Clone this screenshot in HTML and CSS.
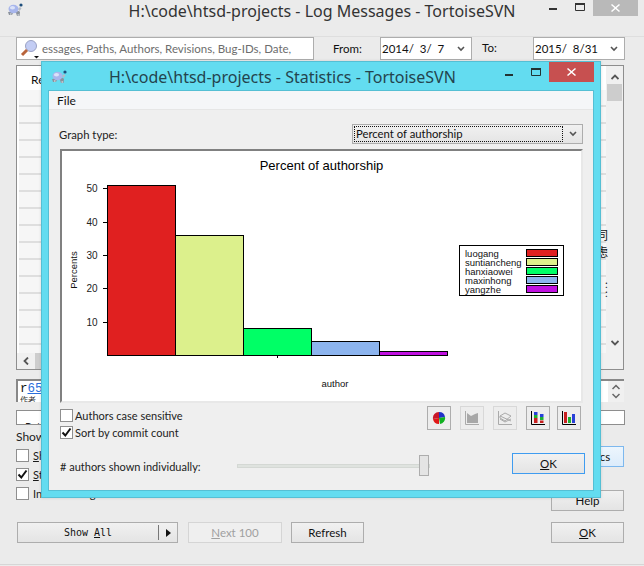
FILE: index.html
```html
<!DOCTYPE html>
<html lang="en">
<head>
<meta charset="utf-8">
<title>Log Messages - TortoiseSVN</title>
<link rel="stylesheet" href="styles.css">
</head>
<body>
<div class="log">
  <header class="titlebar">
    <svg class="turtle" viewBox="0 0 16 14"><path d="M1 9l1 3h3l1-2h3l1 3h2.500l.5-4-1-1z" fill="#8b929c"/><path d="M3 11h1.500M10.500 12h1.500" stroke="#eef0f4" stroke-width="1.200"/><ellipse cx="6.500" cy="6" rx="5" ry="4.200" fill="#a8b6ec"/><ellipse cx="5.500" cy="4.800" rx="2.600" ry="1.700" fill="#dbe2f8"/><path d="M11 6l2-2 1.500 1.500L12.500 8z" fill="#b4bac6"/><circle cx="14" cy="2" r="1.600" fill="#1d4d7c"/></svg>
    <h1 class="title">H:\code\htsd-projects - Log Messages - TortoiseSVN</h1>
    <div class="caption">
      <svg class="cap-min" viewBox="0 0 8 2"><rect width="8" height="2" fill="#333"/></svg>
      <svg class="cap-max" viewBox="0 0 10 8"><path d="M.5 1.500h9v6h-9z" fill="none" stroke="#333"/><rect width="10" height="2" fill="#333"/></svg>
      <span class="cap-close cap-close-idle"><svg viewBox="0 0 9 8"><path d="M1 0l3.500 3L8 0l1 1-3.500 3L9 7 8 8 4.500 5 1 8 0 7l3.500-3L0 1z" fill="#fff"/></svg></span>
    </div>
  </header>

  <div class="toolbar">
    <div class="search">
      <svg class="search-icon" viewBox="0 0 22 20"><circle cx="12" cy="7" r="5.500" fill="#c3cdf4" stroke="#9aa2c4"/><path d="M8 11L3 16" stroke="#b8643c" stroke-width="3"/><path d="M15 17h5l-2.500 2.500z" fill="#111"/></svg>
      <span class="search-text">essages, Paths, Authors, Revisions, Bug-IDs, Date,</span>
    </div>
    <label class="from">From:</label>
    <div class="date"><span>2014/  3/  7</span><svg class="chev" viewBox="0 0 8 6"><path d="M1 1l3 3 3-3" fill="none" stroke="#555" stroke-width="1.600"/></svg></div>
    <label class="to">To:</label>
    <div class="date"><span>2015/  8/31</span><svg class="chev" viewBox="0 0 8 6"><path d="M1 1l3 3 3-3" fill="none" stroke="#555" stroke-width="1.600"/></svg></div>
  </div>

  <div class="list">
    <div class="list-main">
      <div class="list-head">Re</div>
      <div class="rows">
        <span class="peek peek-a">同</span>
        <span class="peek peek-b">虑</span>
        <span class="peek peek-c">:</span>
        <span class="peek peek-d">:</span>
      </div>
      <div class="hscroll"><svg class="arrow-h" viewBox="0 0 6 8"><path d="M5 0.500L1.500 4 5 7.500" fill="none" stroke="#555" stroke-width="1.800"/></svg><span class="hthumb"></span></div>
    </div>
    <div class="vscroll">
      <svg class="arrow-v" viewBox="0 0 8 6"><path d="M.5 5L4 1.500 7.500 5" fill="none" stroke="#555" stroke-width="1.800"/></svg>
      <span class="vthumb"></span>
      <svg class="arrow-v arrow-down" viewBox="0 0 8 6"><path d="M.5 1L4 4.500 7.500 1" fill="none" stroke="#555" stroke-width="1.800"/></svg>
    </div>
  </div>

  <div class="message">
    <div class="rev-wrap">
      <div class="rev">r<a class="rev-link">65</a></div>
      <div class="rev-sub">作者</div>
    </div>
    <div class="spin">
      <svg viewBox="0 0 8 6"><path d="M.5 5L4 1.500 7.500 5" fill="none" stroke="#666" stroke-width="1.500"/></svg>
      <svg viewBox="0 0 8 6"><path d="M.5 1L4 4.500 7.500 1" fill="none" stroke="#666" stroke-width="1.500"/></svg>
    </div>
  </div>
  <div class="paths"><span>Path</span></div>

  <div class="lower">
    <div class="options">
      <div class="show">Show</div>
      <div class="check-row"><span class="box"></span><span><u>S</u>how only affected paths</span></div>
      <div class="check-row"><span class="box"><svg viewBox="0 0 11 11"><path d="M1.500 5.500l2.800 3L9.500 1.500" fill="none" stroke="#111" stroke-width="2"/></svg></span><span><u>S</u>top on copy/rename</span></div>
      <div class="check-row"><span class="box"></span><span>Include merged revisions</span></div>
    </div>
    <div class="side">
      <button class="btn btn-side btn-focus">Statistics</button>
      <button class="btn btn-side btn-help">Help</button>
    </div>
  </div>

  <div class="footer">
    <div class="btn split"><span class="split-label">Show <u>A</u>ll</span><span class="split-arrow"></span></div>
    <button class="btn btn-next" disabled><u>N</u>ext 100</button>
    <button class="btn btn-refresh">Refresh</button>
    <button class="btn btn-ok"><u>O</u>K</button>
  </div>
</div>

<section class="stats">
  <header class="stats-title">
    <svg class="turtle" viewBox="0 0 16 14"><path d="M1 9l1 3h3l1-2h3l1 3h2.500l.5-4-1-1z" fill="#8b929c"/><path d="M3 11h1.500M10.500 12h1.500" stroke="#eef0f4" stroke-width="1.200"/><ellipse cx="6.500" cy="6" rx="5" ry="4.200" fill="#a8b6ec"/><ellipse cx="5.500" cy="4.800" rx="2.600" ry="1.700" fill="#dbe2f8"/><path d="M11 6l2-2 1.500 1.500L12.500 8z" fill="#b4bac6"/><circle cx="14" cy="2" r="1.600" fill="#1d4d7c"/></svg>
    <h2 class="title stats-name">H:\code\htsd-projects - Statistics - TortoiseSVN</h2>
    <div class="caption">
      <svg class="cap-min" viewBox="0 0 8 2"><rect width="8" height="2" fill="#233"/></svg>
      <svg class="cap-max" viewBox="0 0 10 8"><path d="M.5 1.500h9v6h-9z" fill="none" stroke="#233"/><rect width="10" height="2" fill="#233"/></svg>
      <span class="cap-close cap-close-hot"><svg viewBox="0 0 9 8"><path d="M1 0l3.500 3L8 0l1 1-3.500 3L9 7 8 8 4.500 5 1 8 0 7l3.500-3L0 1z" fill="#fff"/></svg></span>
    </div>
  </header>
  <div class="client">
    <nav class="menu">File</nav>
    <div class="graph-row">
      <span class="graph-label">Graph type:</span>
      <div class="combo"><span class="combo-focus">Percent of authorship</span><svg class="chev" viewBox="0 0 8 6"><path d="M1 1l3 3 3-3" fill="none" stroke="#555" stroke-width="1.600"/></svg></div>
    </div>
    <div class="chart">
      <svg class="chart-svg" viewBox="62 151 519 250">
        <text class="c-title" x="321.500" y="170">Percent of authorship</text>
        <g class="c-bars">
          <rect x="107.500" y="185.500" width="68" height="170" fill="#e02020"/>
          <rect x="175.500" y="235.500" width="68" height="120" fill="#dcf08c"/>
          <rect x="243.500" y="328.500" width="68" height="27" fill="#00ff66"/>
          <rect x="311.500" y="341.500" width="68" height="14" fill="#8cb4ee"/>
          <rect x="379.500" y="351.500" width="68" height="4" fill="#c010e0"/>
        </g>
        <path class="c-ticks" d="M103 188.500h4M103 222.500h4M103 255.500h4M103 288.500h4M103 322.500h4M277.500 355v3"/>
        <g class="c-label">
          <text x="97.500" y="191.500">50</text>
          <text x="97.500" y="225.500">40</text>
          <text x="97.500" y="258.500">30</text>
          <text x="97.500" y="291.500">20</text>
          <text x="97.500" y="325.500">10</text>
        </g>
        <text class="c-small" transform="translate(76.500 270) rotate(-90)" text-anchor="middle">Percents</text>
        <text class="c-small" x="335" y="387" text-anchor="middle">author</text>
        <rect class="c-legend" x="459.500" y="245.500" width="104" height="50"/>
        <g class="c-small">
          <text x="465" y="257">luogang</text>
          <text x="465" y="266">suntiancheng</text>
          <text x="465" y="275">hanxiaowei</text>
          <text x="465" y="284">maxinhong</text>
          <text x="465" y="293">yangzhe</text>
        </g>
        <g class="c-bars">
          <rect x="526.500" y="249.500" width="31" height="7" fill="#e02020"/>
          <rect x="526.500" y="258.500" width="31" height="7" fill="#dcf08c"/>
          <rect x="526.500" y="267.500" width="31" height="7" fill="#00ff66"/>
          <rect x="526.500" y="276.500" width="31" height="7" fill="#8cb4ee"/>
          <rect x="526.500" y="285.500" width="31" height="7" fill="#c010e0"/>
        </g>
      </svg>
    </div>
    <div class="controls">
      <div class="checks">
        <div class="check-row stat-check"><span class="box"></span><span>Authors case sensitive</span></div>
        <div class="check-row stat-check"><span class="box"><svg viewBox="0 0 11 11"><path d="M1.500 5.500l2.800 3L9.500 1.500" fill="none" stroke="#111" stroke-width="2"/></svg></span><span>Sort by commit count</span></div>
      </div>
      <div class="tools">
        <span class="tool"><svg viewBox="0 0 14 14"><path d="M7 7V1a6 6 0 0 1 6 5z" fill="#2030c8"/><path d="M7 7l6-1a6 6 0 0 1-5 7z" fill="#10b020"/><path d="M7 7v6a6 6 0 0 1-6-5z" fill="#e01818"/><path d="M7 7L1 8a6 6 0 0 1 6-7z" fill="#c81828"/></svg></span>
        <span class="tool tool-off"><svg viewBox="0 0 14 14"><path d="M.5 0v13.500H14" fill="none" stroke="#aaa"/><path d="M2 2l4 3 4-2 3-1v10H2z" fill="#a8a8a8"/></svg></span>
        <span class="tool tool-off"><svg viewBox="0 0 14 14"><path d="M.5 0v13.500H14" fill="none" stroke="#aaa"/><path d="M2 5l5-3 6 3-6 5-5-3zM2 8l5 3 6-3M2 5l11 5" fill="none" stroke="#aaa"/></svg></span>
        <span class="tool"><svg viewBox="0 0 14 14"><path d="M.5 0v13.500H14" fill="none" stroke="#000"/><rect x="3" y="1" width="3.500" height="3" fill="#2840d8"/><rect x="3" y="4" width="3.500" height="3" fill="#20b030"/><rect x="3" y="7" width="3.500" height="5" fill="#c82020"/><rect x="9" y="3" width="3.500" height="3" fill="#2840d8"/><rect x="9" y="6" width="3.500" height="3" fill="#20b030"/><rect x="9" y="9.500" width="3.500" height="2.500" fill="#c82020"/></svg></span>
        <span class="tool tool-last"><svg viewBox="0 0 14 14"><path d="M.5 0v13.500H14" fill="none" stroke="#000"/><rect x="2" y="1" width="3" height="11" fill="#c82020"/><rect x="6" y="6" width="3" height="6" fill="#20b030"/><rect x="10" y="3" width="3" height="9" fill="#2840d8"/></svg></span>
      </div>
    </div>
    <div class="slider-row">
      <span class="slider-label">#&nbsp;authors shown individually:</span>
      <div class="slider"><span class="thumb"></span></div>
      <button class="btn btn-stat-ok"><u>O</u>K</button>
    </div>
  </div>
</section>
</body>
</html>
```
FILE: styles.css
```css
* { box-sizing: border-box; }
html, body { margin: 0; padding: 0; }
body {
  position: relative;
  width: 644px;
  height: 566px;
  overflow: hidden;
  background: #ebebeb;
  font: 11px "Lato", "Noto Sans", sans-serif;
  color: #1a1a1a;
}
u { text-decoration: underline; }

.log {
  height: 565px;
  border-bottom: 1px solid #d6d6d6;
  display: flex;
  flex-direction: column;
}
.titlebar {
  height: 37px;
  flex: none;
  position: relative;
  display: flex;
  justify-content: center;
  padding-top: 1px;
  border-bottom: 1px solid #dedede;
}
.title {
  margin: 0;
  font: 400 16px/20px "Noto Sans", sans-serif;
  color: #333;
  white-space: nowrap;
}
.turtle { position: absolute; left: 7px; top: 3px; width: 16px; height: 14px; }
.caption { position: absolute; right: 6px; top: 0; display: flex; align-items: flex-start; }
.cap-min { width: 8px; height: 2px; margin-top: 8px; }
.cap-max { width: 10px; height: 8px; margin: 3px 8px 0 18px; }
.cap-close { width: 45px; height: 16px; display: flex; align-items: center; justify-content: center; }
.cap-close svg { width: 9px; height: 8px; }
.cap-close-idle { background: #b9b9b9; }
.cap-close-hot { background: #c75050; height: 20px; }

.toolbar {
  height: 23px;
  flex: none;
  padding-left: 16px;
  display: flex;
  align-items: stretch;
  font-size: 11.500px;
}
.search {
  width: 298px;
  border: 1px solid #adadad;
  background: #fff;
  display: flex;
  align-items: center;
  overflow: hidden;
}
.search-icon { width: 22px; height: 20px; margin-left: 2px; flex: none; }
.search-text { margin-left: 1px; color: #6d6d6d; white-space: nowrap; }
.from { margin-left: 19px; width: 47px; line-height: 24px; color: #111; }
.to { margin-left: 10px; width: 51px; line-height: 22px; color: #111; }
.date {
  width: 92px;
  border: 1px solid #adadad;
  background: #fff;
  padding: 0 6px 0 1px;
  display: flex;
  align-items: center;
  justify-content: space-between;
  white-space: pre;
  color: #111;
}
.chev { width: 8px; height: 6px; flex: none; }

.list {
  height: 305px;
  flex: none;
  margin: 5px 20px 0 16px;
  border: 1px solid #8e8e8e;
  background: #fff;
  display: flex;
}
.list-main { flex: 1; display: flex; flex-direction: column; min-width: 0; }
.list-head { height: 24px; padding: 7px 0 0 14px; line-height: 14px; color: #111; font-size: 12px; }
.rows {
  flex: 1;
  position: relative;
  margin-left: 2px;
  background: repeating-linear-gradient(to bottom, #f6f6f6 0 15px, #dedede 15px 17px);
}
.peek {
  position: absolute;
  color: #111;
  font: 12px/12px "Noto Sans CJK SC", sans-serif;
}
.peek-a { left: 577px; top: 139px; }
.peek-b { left: 577px; top: 156px; }
.peek-c { left: 586px; top: 188px; font-size: 10px; }
.peek-d { left: 586px; top: 197px; font-size: 10px; }
.hscroll {
  height: 16px;
  background: #f0f0f0;
  display: flex;
  align-items: center;
  padding-left: 6px;
}
.arrow-h { width: 6px; height: 8px; }
.hthumb { width: 300px; height: 16px; margin-left: 6px; background: #cdcdcd; }
.vscroll {
  width: 17px;
  background: #f0f0f0;
  display: flex;
  flex-direction: column;
  align-items: center;
  padding-top: 8px;
}
.arrow-v { width: 8px; height: 6px; flex: none; }
.vthumb { width: 15px; height: 17px; margin-top: 4px; background: #cdcdcd; flex: none; }
.arrow-down { margin-top: 239px; }

.message {
  height: 23px;
  flex: none;
  margin: 9px 20px 0 16px;
  border-top: 2px solid #888;
  border-left: 2px solid #888;
  background: #fff;
  display: flex;
  justify-content: space-between;
  overflow: hidden;
}
.rev-wrap { padding: 1px 0 0 2px; }
.rev { font: 12.500px/14px "Liberation Mono", monospace; color: #111; }
.rev-link { color: #2a6fdc; text-decoration: underline; }
.rev-sub { font: 8px/8px "Noto Sans CJK SC", sans-serif; color: #333; }
.spin {
  width: 16px;
  background: #f0f0f0;
  display: flex;
  flex-direction: column;
  align-items: center;
  gap: 3px;
  padding-top: 3px;
}
.spin svg { width: 8px; height: 6px; }

.paths {
  height: 15px;
  flex: none;
  margin: 8px 19px 0 16px;
  border: 1px solid #8e8e8e;
  background: #fff;
  overflow: hidden;
  padding: 9px 0 0 8px;
  line-height: 14px;
}

.lower { height: 97px; flex: none; display: flex; justify-content: space-between; padding: 0 20px 0 16px; }
.options { display: flex; flex-direction: column; }
.show { height: 24px; padding-top: 5px; line-height: 14px; color: #222; font-size: 12px; }
.check-row { height: 19px; display: flex; align-items: flex-start; gap: 4px; line-height: 14px; white-space: nowrap; }
.box {
  width: 13px;
  height: 13px;
  border: 1px solid #8f8f8f;
  background: #fff;
  display: block;
  flex: none;
}
.box svg { display: block; width: 11px; height: 11px; }
.side { display: flex; flex-direction: column; width: 73px; }
.btn {
  border: 1px solid #adadad;
  background: linear-gradient(#f1f1f1, #e4e4e4);
  font: 11.500px "Lato", "Noto Sans", sans-serif;
  color: #111;
  padding: 0;
  height: 21px;
}
.btn-side { width: 73px; }
.btn-focus { margin-top: 21px; border-color: #7db8ee; background: linear-gradient(#ecf5fd, #dcecfb); }
.btn-help { margin-top: 23px; }

.footer { height: 21px; flex: none; display: flex; padding-left: 17px; }
.split { width: 161px; display: flex; align-items: stretch; }
.split-label { flex: 1; text-align: center; font: 10px/15px "DejaVu Sans Mono", monospace; color: #111; border-right: 1px solid #777; margin: 2px 0; }
.split-arrow { width: 0; height: 0; align-self: center; margin: 0 6px 0 7px; border-left: 5px solid #111; border-top: 4px solid transparent; border-bottom: 4px solid transparent; }
.btn-next { width: 94px; margin-left: 10px; color: #a0a0a0; border-color: #d5d5d5; background: #efefef; }
.btn-refresh { width: 73px; margin-left: 9px; }
.btn-ok { width: 73px; margin-left: 187px; }

.stats {
  position: absolute;
  left: 41px;
  top: 61px;
  width: 560px;
  height: 437px;
  background: #63dcf0;
  border: 1px solid #55bfd4;
  box-shadow: 0 0 3px rgba(0,0,0,.12);
  padding: 0 6px 6px;
  display: flex;
  flex-direction: column;
}
.stats-title {
  height: 28px;
  flex: none;
  position: relative;
  display: flex;
  justify-content: flex-start;
}
.stats-title .turtle { left: 3px; top: 8px; }
.stats-name { margin: 5px 0 0 61px; color: #23444e; }
.stats-title .caption { right: 0; top: 0; }
.stats-title .cap-min { margin-top: 12px; }
.stats-title .cap-max { margin: 6px 8px 0 18px; }

.client {
  flex: 1;
  background: #efefef;
  border: 1px solid #55bfd4;
  padding: 0 10px 0 11px;
  display: flex;
  flex-direction: column;
}
.menu {
  height: 19px;
  flex: none;
  margin: 0 -10px 0 -11px;
  padding: 3px 0 0 8px;
  line-height: 14px;
  background: #f5f6f8;
  border-bottom: 1px solid #e6e6e6;
  color: #111;
  font-size: 12px;
}
.graph-row { margin-top: 14px; height: 20px; flex: none; display: flex; justify-content: space-between; align-items: center; color: #222; font-size: 11.300px; }
.graph-label { margin-left: -1px; }
.combo {
  width: 231px;
  height: 20px;
  border: 1px solid #adadad;
  background: linear-gradient(#f1f1f1, #e4e4e4);
  display: flex;
  align-items: center;
  justify-content: space-between;
  padding: 1px 5px 1px 1px;
}
.combo-focus { width: 209px; height: 16px; line-height: 14px; padding-left: 1px; border: 1px dotted #111; color: #111; white-space: nowrap; }

.chart {
  margin-top: 5px;
  width: 523px;
  height: 254px;
  background: #fff;
  border: 2px solid #e8e8e8;
  border-top-color: #808080;
  border-left-color: #808080;
  flex: none;
}
.chart-svg { display: block; width: 519px; height: 250px; font-family: "Liberation Sans", Arial, sans-serif; }
.c-title { font-size: 13px; text-anchor: middle; fill: #000; }
.c-bars rect { stroke: #000; stroke-width: 1; }
.c-ticks { stroke: #000; stroke-width: 1; fill: none; }
.c-label { font-size: 10px; text-anchor: end; fill: #222; }
.c-small { font-size: 9.500px; fill: #111; }
.c-legend { fill: #fff; stroke: #000; stroke-width: 1; }

.controls { height: 33px; flex: none; margin-top: 3px; display: flex; justify-content: space-between; padding-right: 2px; }
.checks { padding-top: 3px; }
.stat-check { height: 17px; gap: 2px; color: #222; }
.tools { display: flex; gap: 9px; }
.tool {
  width: 24px;
  height: 24px;
  border: 1px solid #adadad;
  background: #ededed;
  display: flex;
  align-items: center;
  justify-content: center;
}
.tool svg { width: 14px; height: 14px; }
.tool-off { border-color: #d8d8d8; }
.tool-last { margin-left: -2px; }
.slider-row { margin-top: 14px; height: 23px; flex: none; display: flex; align-items: center; color: #222; }
.slider-label { width: 177px; flex: none; margin-top: 4px; }
.slider { width: 193px; height: 4px; margin-top: 3px; background: #dfe3df; border: 1px solid #d4d8d4; position: relative; }
.thumb { position: absolute; right: 0; top: -10px; width: 10px; height: 21px; background: #e4e4e4; border: 1px solid #adadad; }
.btn-stat-ok { width: 73px; margin-left: auto; margin-right: -2px; margin-top: -2px; border-color: #3f9cf0; }
```
